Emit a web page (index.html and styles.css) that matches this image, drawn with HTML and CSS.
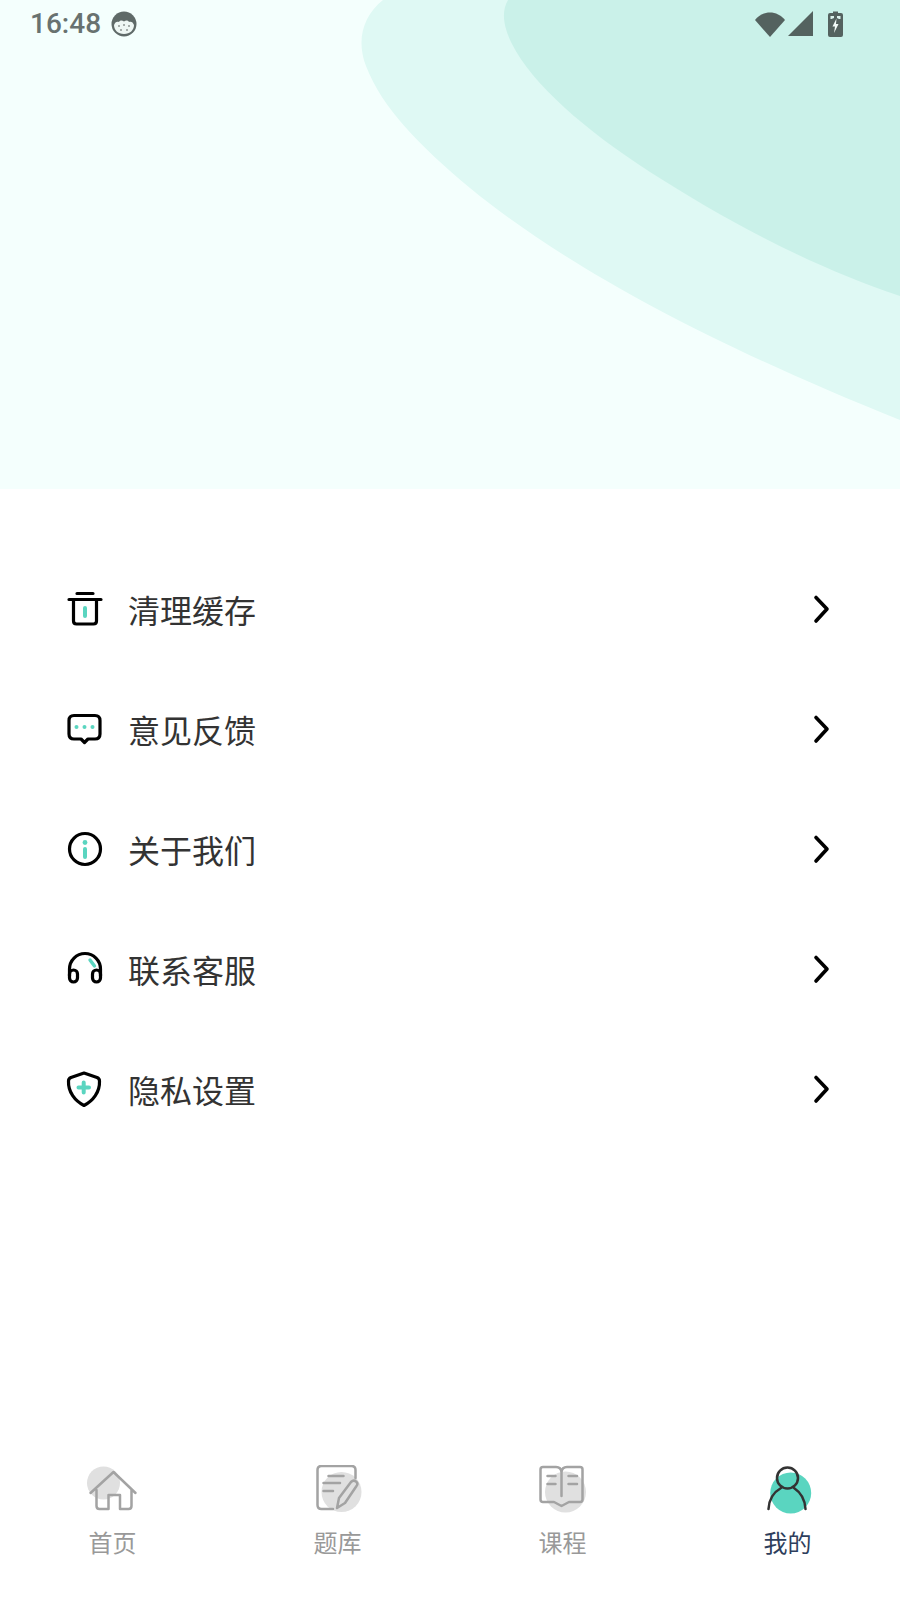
FILE: index.html
```html
<!DOCTYPE html>
<html lang="zh-CN">
<head>
  <meta charset="UTF-8" />
  <meta name="viewport" content="width=device-width, initial-scale=1.0" />
  <title>我的</title>
  <link rel="stylesheet" href="styles.css">
</head>
<body>
  <div class="page">
    <header class="hero">
      <svg class="hero-waves" viewBox="0 0 900 489" aria-hidden="true">
        <path class="wave-outer" d="M383 0 C363 16 356 40 366 66 C382 108 420 146 470 188 C560 262 700 340 900 420 V0 Z" />
        <path class="wave-inner" d="M508 0 C502 10 502 24 512 44 C532 84 585 130 650 172 C725 220 810 266 900 296 V0 Z" />
      </svg>

      <div class="status-bar">
        <span class="time">16:48</span>
        <svg class="face" width="26" height="26" viewBox="0 0 26 26" aria-hidden="true">
          <circle cx="13" cy="13" r="12.5" fill="#5f6a68" />
          <path d="M3 14 C4 11 6 10 8 11 C9 9 11 9 13 10.500 C15 9 17 9 18 11 C20 10 22 11 23 14 C23 19 19 23 13 23 C7 23 3 19 3 14 Z" fill="#eef7f4" />
          <g fill="#8c9592">
            <circle cx="8" cy="15" r="1" />
            <circle cx="13" cy="14" r="1" />
            <circle cx="18" cy="15" r="1" />
            <circle cx="10" cy="19" r="1" />
            <circle cx="16" cy="19" r="1" />
          </g>
        </svg>
        <div class="status-icons">
          <svg width="30" height="26" viewBox="0 0 30 26" aria-hidden="true">
            <path d="M0 9 C8 -1 22 -1 30 9 L15 26 Z" fill="#54625f" />
          </svg>
          <svg width="25" height="25" viewBox="0 0 25 25" aria-hidden="true">
            <path d="M25 0 V25 H0 Z" fill="#54625f" />
          </svg>
          <svg class="battery" width="15" height="26" viewBox="0 0 15 26" aria-hidden="true">
            <path d="M2 2 H5 V0.500 H10 V2 H13 Q15 2 15 4 V24 Q15 26 13 26 H2 Q0 26 0 24 V4 Q0 2 2 2 Z" fill="#54625f" />
            <path d="M2.500 5 H6 V7 L3.500 8 H2.500 Z M9 5 H12.500 V8 H11 L9 7 Z" fill="#dcf3ee" />
            <path d="M8.500 7.500 L4.500 15.500 H7 L6 22 L10.500 13 H8 Z" fill="#f2fbf8" />
          </svg>
        </div>
      </div>
    </header>

    <main class="menu">
      <a class="menu-row">
        <svg class="menu-icon" width="40" height="40" viewBox="0 0 40 40" aria-hidden="true">
          <path d="M12 3.500 H28 M4 9.500 H36 M8.500 10 V31 Q8.500 34 11.500 34 H28.500 Q31.500 34 31.500 31 V10" />
          <path class="accent" d="M20 18 V26" stroke-width="4" />
        </svg>
        <span>清理缓存</span>
        <svg class="chevron" width="20" height="32" viewBox="0 0 20 32" aria-hidden="true"><path d="M5 3.500 L16 15 L5 27" /></svg>
      </a>
      <a class="menu-row">
        <svg class="menu-icon" width="40" height="40" viewBox="0 0 40 40" aria-hidden="true">
          <path d="M9 5.500 H30 Q35 5.500 35 10.500 V24 Q35 29 30 29 H23 L19.500 32.500 L16 29 H9 Q4 29 4 24 V10.500 Q4 5.500 9 5.500 Z" />
          <g class="dots"><circle cx="11.500" cy="17" r="2" /><circle cx="19.500" cy="17" r="2" /><circle cx="27.500" cy="17" r="2" /></g>
        </svg>
        <span>意见反馈</span>
        <svg class="chevron" width="20" height="32" viewBox="0 0 20 32" aria-hidden="true"><path d="M5 3.500 L16 15 L5 27" /></svg>
      </a>
      <a class="menu-row">
        <svg class="menu-icon" width="40" height="40" viewBox="0 0 40 40" aria-hidden="true">
          <circle cx="20" cy="19" r="15.500" />
          <path class="accent" d="M20 19 V27" stroke-width="4" />
          <g class="dots"><circle cx="20" cy="12.500" r="2.400" /></g>
        </svg>
        <span>关于我们</span>
        <svg class="chevron" width="20" height="32" viewBox="0 0 20 32" aria-hidden="true"><path d="M5 3.500 L16 15 L5 27" /></svg>
      </a>
      <a class="menu-row">
        <svg class="menu-icon" width="40" height="40" viewBox="0 0 40 40" aria-hidden="true">
          <path d="M4.500 26 V19 A15.500 15.500 0 0 1 35.500 19 V26" />
          <rect x="4.500" y="20" width="8" height="12" rx="4" />
          <rect x="27.500" y="20" width="8" height="12" rx="4" />
          <path class="accent" d="M25 10 L29.500 16" stroke-width="3.400" />
        </svg>
        <span>联系客服</span>
        <svg class="chevron" width="20" height="32" viewBox="0 0 20 32" aria-hidden="true"><path d="M5 3.500 L16 15 L5 27" /></svg>
      </a>
      <a class="menu-row">
        <svg class="menu-icon" width="40" height="40" viewBox="0 0 40 40" aria-hidden="true">
          <path d="M19 3 L32 7.500 Q34.500 8.500 34.500 11 C35 22 28 31 19 35.500 C10 31 3 22 3.500 11 Q3.500 8.500 6 7.500 Z" />
          <path class="accent" d="M13.500 17.500 H24 M18.700 12.500 V22.500" stroke-width="4" />
        </svg>
        <span>隐私设置</span>
        <svg class="chevron" width="20" height="32" viewBox="0 0 20 32" aria-hidden="true"><path d="M5 3.500 L16 15 L5 27" /></svg>
      </a>
    </main>

    <nav class="tabs">
      <a class="tab">
        <svg width="60" height="50" viewBox="0 0 60 50" aria-hidden="true">
          <circle class="blob" cx="20.500" cy="18" r="16.500" />
          <path class="line" d="M7.500 28 L30.500 7 L52.500 28 M13.500 25 V41 Q13.500 44 16.500 44 H25.500 V30 H37 V44 H45.500 Q48.500 44 48.500 41 V25" />
        </svg>
        <span>首页</span>
      </a>
      <a class="tab">
        <svg width="60" height="50" viewBox="0 0 60 50" aria-hidden="true">
          <circle class="blob" cx="33.500" cy="27" r="20" />
          <path class="line" d="M47.500 13 V5 Q47.500 1 43.500 1 H13.500 Q9.500 1 9.500 5 V40 Q9.500 44 13.500 44 H25 M20.500 11 H35.500 M15.500 18 H32 M15.500 26 H25 M29 43 L31 33 L43 17 Q45.500 14.500 48 16.500 Q50.500 18.500 48.500 21 L37 38 Z" />
        </svg>
        <span>题库</span>
      </a>
      <a class="tab">
        <svg width="60" height="50" viewBox="0 0 60 50" aria-hidden="true">
          <circle class="blob" cx="32.500" cy="27" r="20.500" />
          <path class="line" d="M10 2 H23 Q28 2 28.500 7 Q29 2 34 2 H47 Q49.500 2 49.500 4.500 V34.500 Q49.500 37 47 37 H36 L28.500 41 L21 37 H10 Q7.500 37 7.500 34.500 V4.500 Q7.500 2 10 2 Z M28.500 7 V31 M14.500 11 H22.500 M14.500 19 H22.500 M35.500 11 H44 M35.500 19 H44" />
        </svg>
        <span>课程</span>
      </a>
      <a class="tab active">
        <svg width="60" height="50" viewBox="0 0 60 50" aria-hidden="true">
          <circle class="blob" cx="32.700" cy="28" r="20.500" />
          <path class="line" d="M10.500 44 C11 34 16 27 23 23 M36 23 C42 27 47 34 47.500 44" />
          <circle class="line" cx="29.500" cy="13" r="10.500" />
        </svg>
        <span>我的</span>
      </a>
    </nav>
  </div>
</body>
</html>
```

FILE: styles.css
```css
* {
  box-sizing: border-box;
}

body {
  margin: 0;
  background: white;
  font-family: "Noto Sans CJK SC", "Noto Sans", sans-serif;
  color: #333333;
}

.page {
  display: flex;
  flex-direction: column;
  min-height: 1600px;
}

/* Top banner */
.hero {
  position: relative;
  height: 489px;
  background: #f4fffd;
}

.hero-waves {
  position: absolute;
  top: 0;
  left: 0;
  width: 100%;
  height: 100%;
}

.wave-outer {
  fill: #dff9f4;
}

.wave-inner {
  fill: #caf1e9;
}

.status-bar {
  position: relative;
  display: flex;
  align-items: center;
  height: 47px;
  padding: 0 57px 0 30px;
  color: #687270;
}

.time {
  font-family: Roboto, sans-serif;
  font-size: 28px;
  font-weight: 500;
}

.face {
  margin-left: 10px;
}

.status-icons {
  display: flex;
  align-items: center;
  gap: 3px;
  margin-left: auto;
}

.battery {
  margin-left: 12px;
}

/* Menu list */
.menu {
  padding-top: 61px;
}

.menu-row {
  display: flex;
  align-items: center;
  height: 120px;
  padding: 0 69px 0 65px;
  font-size: 32px;
}

.menu-row span {
  margin-bottom: 2px;
}

.menu-icon {
  flex: none;
  margin-right: 23px;
  fill: none;
  stroke: #000000;
  stroke-width: 3.200;
  stroke-linecap: round;
  stroke-linejoin: round;
}

.menu-icon .accent {
  stroke: #5ad5c0;
}

.menu-icon .dots {
  fill: #5ad5c0;
  stroke: none;
}

.chevron {
  margin-left: auto;
  fill: none;
  stroke: #000000;
  stroke-width: 3.600;
  stroke-linecap: round;
  stroke-linejoin: round;
}

/* Bottom tabs */
.tabs {
  display: grid;
  grid-template-columns: repeat(4, 1fr);
  margin-top: auto;
  padding-bottom: 42px;
}

.tab {
  display: flex;
  flex-direction: column;
  align-items: center;
  gap: 10px;
  font-size: 24px;
  line-height: 32px;
  color: #999999;
}

.tab svg {
  margin-bottom: 1px;
}

.tab .blob {
  fill: #e0e0e0;
}

.tab .line {
  fill: none;
  stroke: #a3a3a3;
  stroke-width: 2.500;
  stroke-linecap: round;
  stroke-linejoin: round;
}

.tab.active {
  color: #2e3e5c;
}

.tab.active .blob {
  fill: #5ad5c0;
}

.tab.active .line {
  stroke: #333333;
}
```
